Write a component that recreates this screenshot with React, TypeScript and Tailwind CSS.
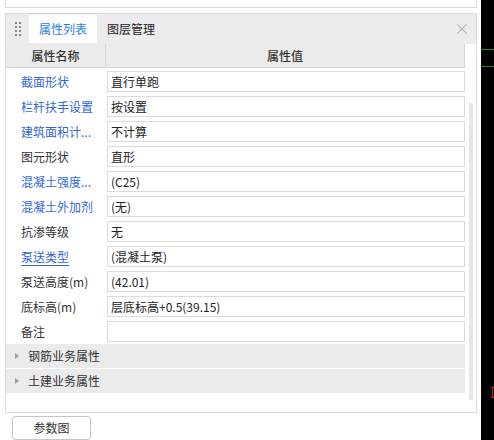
import { X } from 'lucide-react'

type Row = { label: string; value: string; link?: boolean; underline?: boolean }

const rows: Row[] = [
  { label: '截面形状', value: '直行单跑', link: true },
  { label: '栏杆扶手设置', value: '按设置', link: true },
  { label: '建筑面积计...', value: '不计算', link: true },
  { label: '图元形状', value: '直形' },
  { label: '混凝土强度...', value: '(C25)', link: true },
  { label: '混凝土外加剂', value: '(无)', link: true },
  { label: '抗渗等级', value: '无' },
  { label: '泵送类型', value: '(混凝土泵)', link: true, underline: true },
  { label: '泵送高度(m)', value: '(42.01)' },
  { label: '底标高(m)', value: '层底标高+0.5(39.15)' },
  { label: '备注', value: '' },
]

const groups = ['钢筋业务属性', '土建业务属性']

function DragHandle() {
  return (
    <div className="grid grid-cols-2 gap-x-[2px] gap-y-[2px] w-[6px]">
      {Array.from({ length: 8 }).map((_, i) => (
        <span key={i} className="w-[2px] h-[2px] bg-[#8a8a8a]" />
      ))}
    </div>
  )
}

export default function App() {
  return (
    <div
      className="w-[494px] h-[440px] flex bg-white overflow-hidden text-[12px] text-[#333]"
      style={{ fontFamily: '"Noto Sans CJK SC", "Noto Sans", sans-serif' }}
    >
      {/* Main column */}
      <div className="w-[482px] flex flex-col">
        {/* top box remnant */}
        <div className="ml-[5px] w-[472px] h-[8px] border-x border-b border-[#dcdcdc]" />

        {/* Properties panel */}
        <div className="ml-[5px] mt-[5px] w-[472px] h-[400px] border border-[#dcdcdc] flex flex-col">
          {/* Tabs */}
          <div className="h-[30px] bg-[#ececee] flex items-center shrink-0">
            <div className="w-[23px] flex justify-center pl-[1px]">
              <DragHandle />
            </div>
            <div className="h-[28px] w-[68px] bg-white flex items-center justify-center text-[#2b7de9] leading-none">
              属性列表
            </div>
            <div className="ml-[10px] leading-none text-[#222]">图层管理</div>
            <div className="ml-auto mr-[5px] text-[#a8a8a8]">
              <X size={18} strokeWidth={1.4} />
            </div>
          </div>

          {/* Body */}
          <div className="flex-1 flex bg-white">
            <div className="w-[459px] flex flex-col">
              {/* header */}
              <div className="h-[24px] flex bg-[#ebebeb] border-b border-r border-[#d6d6d6] shrink-0">
                <div className="w-[100px] flex items-center justify-center border-r border-[#d6d6d6] text-[#333] font-medium">
                  属性名称
                </div>
                <div className="flex-1 flex items-center justify-center text-[#333] font-medium">属性值</div>
              </div>

              {/* rows */}
              <div className="pt-[3px] flex flex-col gap-[4px]">
                {rows.map((r) => (
                  <div key={r.label} className="h-[21px] flex items-center">
                    <div
                      className={`w-[101px] pl-[15px] whitespace-nowrap leading-none ${
                        r.link ? 'text-[#3068d8]' : 'text-[#333]'
                      } ${r.underline ? 'underline underline-offset-[3px]' : ''}`}
                    >
                      {r.label}
                    </div>
                    <div className="w-[358px] h-[21px] border border-[#dcdcdc] flex items-center pl-[3px] leading-none text-[#222]">
                      {r.value}
                    </div>
                  </div>
                ))}
              </div>

              {/* groups */}
              <div className="mt-[2px] flex flex-col gap-[1px]">
                {groups.map((g) => (
                  <div key={g} className="h-[24px] bg-[#ebebeb] flex items-center">
                    <svg width="4" height="6" viewBox="0 0 4 6" className="ml-[9px] mr-[9px]">
                      <path d="M0 0 L4 3 L0 6 Z" fill="#9a9a9a" />
                    </svg>
                    <span className="leading-none text-[#333]">{g}</span>
                  </div>
                ))}
              </div>
            </div>

            {/* scrollbar */}
            <div className="flex-1 flex justify-center">
              <div className="mt-[59px] w-[4px] h-[297px] bg-[#e6e6e6] rounded-[1px]" />
            </div>
          </div>
        </div>

        {/* bottom button */}
        <div className="ml-[12px] mt-[3px] w-[79px] h-[24px] border border-[#c6c6c6] rounded-[3px] flex items-center justify-center leading-none text-[#333]">
          参数图
        </div>
      </div>

      {/* black strip */}
      <div className="flex-1 bg-black flex flex-col">
        <div className="mt-[49px] h-[1px] bg-[#1c8a1c]" />
        <div className="mt-[16px] h-[1px] bg-[#1c8a1c]" />
        <div className="mt-[320px] pl-[10px]">
          <svg width="3" height="11" viewBox="0 0 3 11">
            <path d="M0 0 H3 V1 H2 V10 H3 V11 H0 V10 H1 V1 H0 Z" fill="#e01010" />
          </svg>
        </div>
      </div>
    </div>
  )
}
